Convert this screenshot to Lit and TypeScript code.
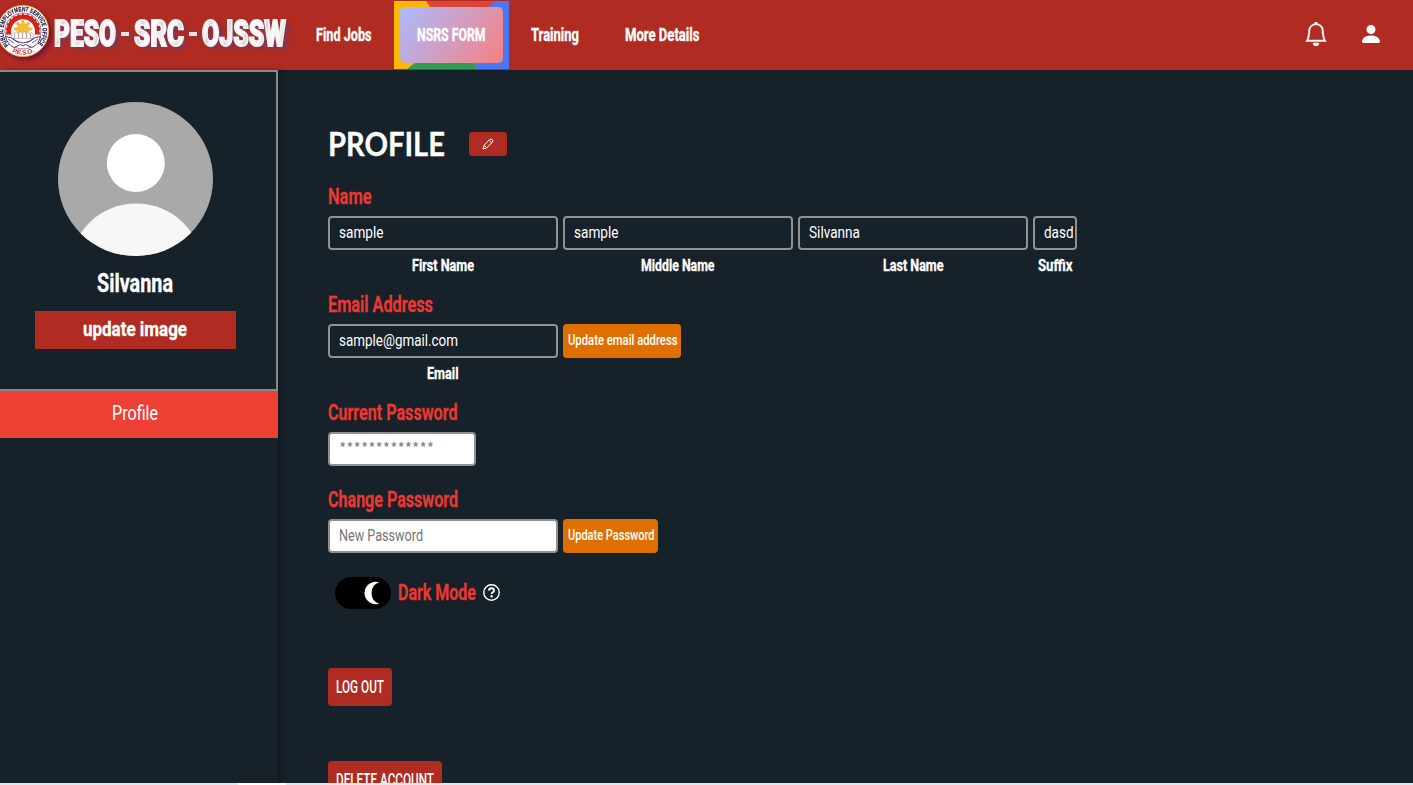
import { LitElement, html, svg, css } from "lit";
import { customElement } from "lit/decorators.js";

// Condensed lettering: the box is exactly as tall as the capitals, and the
// glyphs are narrowed to the given width.
const label = (text: string, width: number, cap: number, cls = "") => html`
  <svg class="label ${cls}" width=${width} height=${cap}>
    <text x="0" y=${cap} font-size=${cap / 0.711} textLength=${width} lengthAdjust="spacingAndGlyphs">${text}</text>
  </svg>`;

const field = (text: string, width: number, size: string) => html`
  <div class="field ${size}">${label(text, width, 12)}</div>`;

@customElement("peso-seal")
export class PesoSeal extends LitElement {
  static styles = css`
    :host { display: block; width: 49px; height: 60px; }
    svg { display: block; overflow: visible; filter: drop-shadow(3px 3px 2px rgba(90, 10, 60, 0.7)); }
    text { font-family: "Liberation Sans", sans-serif; font-weight: 700; }
  `;
  render() {
    const teeth = Array.from({ length: 22 }, (_, i) => i * 16.36);
    const rays = Array.from({ length: 8 }, (_, i) => i * 45);
    return html`<svg width="49" height="60" viewBox="0 0 49 60">
      <defs>
        <path id="arc" d="M9.1 44.9A19.7 19.7 0 1 1 36.9 44.9" />
        <path id="low" d="M9 50A23.6 23.6 0 0 0 37 50" />
      </defs>
      <circle cx="23" cy="31" r="25.6" fill="#fff" stroke="#e0ad4c" stroke-width=".9" />
      <circle cx="23" cy="31" r="18" fill="#fff" stroke="#3b246f" stroke-width=".6" />
      <path d="M6.9 34.5A16.5 16.5 0 1 1 39.1 34.5L34.5 34.5A11.8 11.8 0 1 0 11.5 34.5Z" fill="#d81f18" />
      ${teeth.map((a) => svg`<rect x="22" y="13.6" width="2" height="2.4" fill="#d81f18" transform="rotate(${a} 23 31)" opacity=${a > 105 && a < 255 ? 0 : 1} />`)}
      <circle cx="23" cy="31" r="11.8" fill="#fff" />
      ${rays.map((a) => svg`<path d="M20.6 27L22 19.2L23 20.6L24 19.2L25.4 27Z" fill="#f2b632" transform="rotate(${a} 23 29)" />`)}
      <circle cx="23" cy="29" r="6" fill="#f5bd35" />
      <path d="M11.5 38.5V34l2-1.5 1.5 1.5 1.5-2.5 2 2.5 1.8-3 2 3 1.8-3 2 3 1.6-2.5 1.8 2.5 1.6-2 2 2v4.5Z" fill="#fff" stroke="#b3958f" stroke-width=".6" />
      <path d="M14.5 34v4M18.5 34v4M22.5 34v4M26.5 34v4M30.5 34v4" stroke="#9a7f8f" stroke-width=".7" />
      <path d="M5.5 36.5Q12 37 16 41.2L22.8 43L29.8 41.2Q34 37 40.5 36.5Q39 44 32 47.5L25.5 44.5L23 46L20.5 44.5L14 47.5Q7 44 5.5 36.5Z" fill="#fff" stroke="#3b246f" stroke-width=".9" />
      <path d="M8 39l6 4M38 39l-6 4M12 38l7 5M34 38l-7 5" stroke="#3b246f" stroke-width=".7" />
      <text font-size="6.4" fill="#21123f" stroke="#21123f" stroke-width=".2"><textPath href="#arc" textLength="91" lengthAdjust="spacingAndGlyphs">PUBLIC EMPLOYMENT SERVICE OFFICE</textPath></text>
      <text font-size="6.4" fill="#e01f18"><textPath href="#low" startOffset="3.5" textLength="23">P.E.S.O.</textPath></text>
    </svg>`;
  }
}

@customElement("app-root")
export class AppRoot extends LitElement {
  static styles = css`
    :host {
      display: flex; flex-direction: column; height: 785px; overflow: hidden;
      background: #17212a; color: #fff; font-family: Roboto, "Liberation Sans", sans-serif;
    }
    * { box-sizing: border-box; }
    svg { display: block; flex: none; }
    .label { overflow: visible; fill: #fff; }
    .bold { font-weight: 700; stroke: #fff; stroke-width: 0.35; }
    .semi { font-weight: 500; }
    .grey { fill: #757575; }
    .red { font-weight: 600; fill: #ed3833; stroke: #ed3833; stroke-width: 0.35; }

    header { display: flex; flex: none; height: 70px; background: #b02b21; }
    .brand { display: flex; gap: 5px; padding: 19.5px 0 0 5px; width: 250px; filter: drop-shadow(4px 3px 1px rgba(125, 55, 85, 0.75)); }
    .brand .label { font-weight: 900; fill: url(#bevel); stroke: #f2f2f2; stroke-width: 1.9; }
    .brand .dash { width: 8px; height: 4px; margin-top: 12px; background: #e4e4e4; }
    .defs { width: 0; height: 0; margin-right: -5px; }
    nav { display: flex; flex: 1; }
    nav > .label { margin-top: 28px; }
    .first { margin-left: 17px; }
    .nsrs { display: grid; width: 115px; height: 68px; margin: 1px 22px 0 22px; }
    .nsrs > * { grid-area: 1 / 1; }
    .nsrs .pill { margin: 6px; display: grid; place-items: center; border-radius: 5px; background: linear-gradient(125deg, #aabbff, #f88080); padding-bottom: 2px; }
    .more { margin-left: 46px; }
    .tools { display: flex; gap: 31px; padding: 22px 30px 0 0; }

    .body { display: flex; flex: 1; min-height: 0; }
    aside { width: 278px; flex: none; box-shadow: 4px 0 4px rgba(10, 14, 26, 0.4); }
    .card { height: 321px; border: 2px solid #888; border-left: 0; padding: 30px 6px 0 0; display: flex; flex-direction: column; align-items: center; }
    .card > .label { margin-top: 17.5px; }
    .update { display: flex; justify-content: center; width: 201px; height: 38px; margin-top: 19.5px; padding-top: 10px; background: #b02b21; }
    .tab { display: flex; justify-content: center; height: 47px; padding: 15px 7.5px 0 0; background: #ee3f34; }

    main { flex: 1; padding: 62px 0 0 50px; }
    .title { display: flex; gap: 24px; height: 24px; }
    .title .label { font-family: Lato, sans-serif; font-weight: 700; stroke: #fff; stroke-width: 0.3; margin: 0 0.5px 0 -0.5px; }
    .edit { display: grid; place-items: center; width: 38px; height: 24px; border-radius: 4px; background: #b02b21; }
    .section { padding-top: 31.5px; }
    .row { display: flex; gap: 5px; margin-top: 13px; }
    .cell { display: flex; flex-direction: column; align-items: center; gap: 8.5px; padding-bottom: 0.5px; }
    .field { height: 34px; padding: 7.8px 0 0 9px; border: 2px solid #919191; border-radius: 4px; overflow: hidden; }
    .wide { width: 230px; }
    .narrow { width: 44px; }
    .short { width: 148px; }
    .white { background: #fff; }
    .stars { padding-top: 8px; }
    .stars .label { font-family: "Liberation Mono", monospace; stroke: #757575; stroke-width: 0.25; }
    .orange { height: 34px; padding: 11.2px 4px 0 4.5px; border-radius: 4px; background: #df7000; }
    .after { padding-top: 24.5px; }
    .mode { display: flex; align-items: center; gap: 7px; margin: 24px 0 0 7px; height: 32px; }
    .mode .label, .help { margin-bottom: 2px; }
    .btn { display: block; width: fit-content; height: 38px; padding: 11.5px 8px 0; border-radius: 4px; background: #b02b21; }
    .out { margin-top: 59px; }
    .del { margin-top: 55px; }
    footer { flex: none; height: 2px; background: linear-gradient(90deg, #d9eaf3 238px, #fff 238px, #fff 286px, #d9eaf3 286px); }
  `;

  render() {
    return html`
      <header>
        <peso-seal></peso-seal>
        <div class="brand">
          <svg class="defs"><defs>
            <linearGradient id="bevel" x1="0" x2="9" y1="0" y2="2" gradientUnits="userSpaceOnUse" spreadMethod="reflect">
              <stop offset="0" stop-color="#fff" /><stop offset=".55" stop-color="#fafafa" /><stop offset="1" stop-color="#d6d6d6" />
            </linearGradient>
          </defs></svg>
          ${label("PESO", 62, 26)}<div class="dash"></div>${label("SRC", 50, 26)}
          <div class="dash"></div>${label("OJSSW", 84, 26)}
        </div>
        <nav>
          ${label("Find Jobs", 55.5, 12.5, "bold first")}
          <div class="nsrs">
            <svg width="115" height="68">
              <rect width="115" height="68" fill="#fbb905" />
              <path d="M32 0H103L57 34Z" fill="#db4437" />
              <path d="M102 0H115V68H84L57 34Z" fill="#4a78f5" />
              <path d="M13 68H84L57 34Z" fill="#329b55" />
            </svg>
            <div class="pill">${label("NSRS FORM", 68.5, 12.5, "bold")}</div>
          </div>
          ${label("Training", 48, 12.5, "bold")}
          ${label("More Details", 74.5, 12.5, "bold more")}
        </nav>
        <div class="tools">
          <svg width="24" height="24" viewBox="0 0 16 16" fill="#fff" stroke="#fff" stroke-width=".3"><path d="M8 16a2 2 0 0 0 2-2H6a2 2 0 0 0 2 2zM8 1.918l-.797.161A4.002 4.002 0 0 0 4 6c0 .628-.134 2.197-.459 3.742-.16.767-.376 1.566-.663 2.258h10.244c-.287-.692-.502-1.49-.663-2.258C12.134 8.197 12 6.628 12 6a4.002 4.002 0 0 0-3.203-3.92L8 1.917zM14.22 12c.223.447.481.801.78 1H1c.299-.199.557-.553.78-1C2.68 10.2 3 6.88 3 6c0-2.42 1.72-4.44 4.005-4.901a1 1 0 1 1 1.99 0A5.002 5.002 0 0 1 13 6c0 .88.32 4.2 1.22 6z" /></svg>
          <svg width="24" height="24" viewBox="0 0 16 16" fill="#fff"><path d="M3 14s-1 0-1-1 1-4 6-4 6 3 6 4-1 1-1 1H3zm5-6a3 3 0 1 0 0-6 3 3 0 0 0 0 6z" /></svg>
        </div>
      </header>
      <div class="body">
        <aside>
          <div class="card">
            <svg width="155" height="154" viewBox="0 0 155 154">
              <clipPath id="face"><ellipse cx="77.5" cy="77" rx="77.5" ry="77" /></clipPath>
              <g clip-path="url(#face)">
                <rect width="155" height="154" fill="#a9a9a9" />
                <circle cx="77.8" cy="61" r="29" fill="#fff" />
                <circle cx="78.2" cy="168" r="66.6" fill="#f7f7f7" />
              </g>
            </svg>
            ${label("Silvanna", 76, 18, "bold")}
            <div class="update">${label("update image", 104, 15, "bold")}</div>
          </div>
          <div class="tab">${label("Profile", 46, 14)}</div>
        </aside>
        <main>
          <div class="title">
            ${label("PROFILE", 117, 23.5)}
            <div class="edit">
              <svg width="12" height="12" viewBox="0 0 12 12" fill="none" stroke="#fff" stroke-width="1" stroke-linejoin="round"><path d="M1 11L2.2 7.2L7.6 1.5Q8.8.5 10.2 1.5Q11.4 2.8 10.3 4.2L4.8 9.8ZM2.2 7.2L4.8 9.8M7 2.3L9.6 4.9" /></svg>
            </div>
          </div>
          <div class="section">
            ${label("Name", 43.5, 15.5, "red")}
            <div class="row">
              <div class="cell">${field("sample", 44.5, "wide")}${label("First Name", 62, 12, "bold")}</div>
              <div class="cell">${field("sample", 44.5, "wide")}${label("Middle Name", 73.5, 12, "bold")}</div>
              <div class="cell">${field("Silvanna", 51, "wide")}${label("Last Name", 60.5, 12, "bold")}</div>
              <div class="cell">${field("dasd", 29.5, "narrow")}${label("Suffix", 34.5, 12, "bold")}</div>
            </div>
          </div>
          <div class="section after">
            ${label("Email Address", 105, 15.5, "red")}
            <div class="row">
              <div class="cell">${field("sample@gmail.com", 119, "wide")}${label("Email", 31.5, 12, "bold")}</div>
              <div class="orange">${label("Update email address", 109.5, 10, "semi")}</div>
            </div>
          </div>
          <div class="section after">
            ${label("Current Password", 129.5, 15.5, "red")}
            <div class="row">
              <div class="field white short stars">${label("*************", 95, 8.6, "grey")}</div>
            </div>
          </div>
          <div class="section after">
            ${label("Change Password", 130, 15.5, "red")}
            <div class="row">
              <div class="field white wide">${label("New Password", 84, 12, "grey")}</div>
              <div class="orange">${label("Update Password", 86.5, 10, "semi")}</div>
            </div>
          </div>
          <div class="mode">
            <svg width="56" height="32"><rect width="56" height="32" rx="16" /><path d="M44 5.3A11.2 11.2 0 1 0 44 26.7A11.4 11.4 0 0 1 44 5.3Z" fill="#fff" /></svg>
            ${label("Dark Mode", 78, 15.5, "red")}
            <svg class="help" width="17" height="17" viewBox="0 0 16 16" fill="#fff"><circle cx="8" cy="8" r="7.3" fill="none" stroke="#fff" stroke-width="1.3" /><path d="M5.6 6.2Q5.7 4 8 4T10.4 6Q10.4 7 9.2 7.8Q8.2 8.5 8.2 9.4" fill="none" stroke="#fff" stroke-width="1.7" /><circle cx="8.1" cy="11.5" r="1.1" /></svg>
          </div>
          <div class="btn out">${label("LOG OUT", 48, 12.5, "semi")}</div>
          <div class="btn del">${label("DELETE ACCOUNT", 98, 12.5, "semi")}</div>
        </main>
      </div>
      <footer></footer>
    `;
  }
}
